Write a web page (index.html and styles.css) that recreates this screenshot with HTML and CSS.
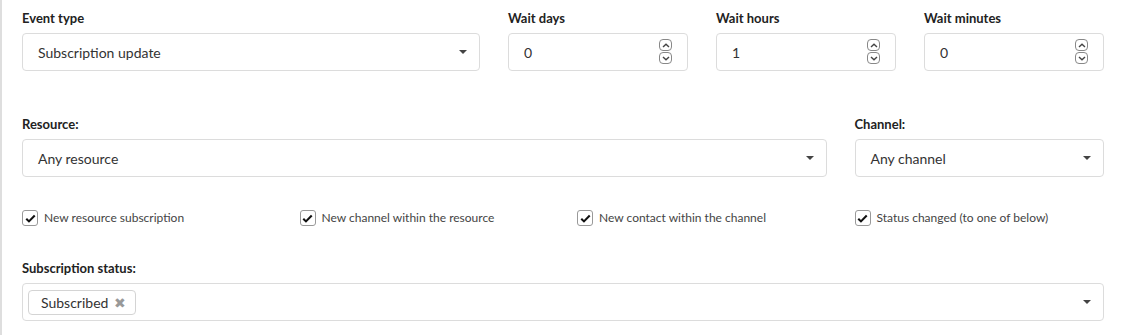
FILE: index.html
```html
<!DOCTYPE html>
<html>
<head>
<meta charset="utf-8">
<link rel="stylesheet" href="styles.css">
</head>
<body>
<div class="panel">
  <div class="row row-top">
    <div class="group">
      <div class="label">Event type</div>
      <div class="field select">
        <span class="value">Subscription update</span>
        <span class="caret"></span>
      </div>
    </div>
    <div class="group">
      <div class="label">Wait days</div>
      <div class="field number">
        <span class="value">0</span>
        <span class="spin"><span class="spin-btn"><svg viewBox="0 0 8 5" width="8" height="5"><path d="M1 4 L4 1.2 L7 4" fill="none" stroke="#444" stroke-width="1.4"/></svg></span><span class="spin-btn"><svg viewBox="0 0 8 5" width="8" height="5"><path d="M1 1 L4 3.8 L7 1" fill="none" stroke="#444" stroke-width="1.4"/></svg></span></span>
      </div>
    </div>
    <div class="group">
      <div class="label">Wait hours</div>
      <div class="field number">
        <span class="value">1</span>
        <span class="spin"><span class="spin-btn"><svg viewBox="0 0 8 5" width="8" height="5"><path d="M1 4 L4 1.2 L7 4" fill="none" stroke="#444" stroke-width="1.4"/></svg></span><span class="spin-btn"><svg viewBox="0 0 8 5" width="8" height="5"><path d="M1 1 L4 3.8 L7 1" fill="none" stroke="#444" stroke-width="1.4"/></svg></span></span>
      </div>
    </div>
    <div class="group">
      <div class="label">Wait minutes</div>
      <div class="field number">
        <span class="value">0</span>
        <span class="spin"><span class="spin-btn"><svg viewBox="0 0 8 5" width="8" height="5"><path d="M1 4 L4 1.2 L7 4" fill="none" stroke="#444" stroke-width="1.4"/></svg></span><span class="spin-btn"><svg viewBox="0 0 8 5" width="8" height="5"><path d="M1 1 L4 3.8 L7 1" fill="none" stroke="#444" stroke-width="1.4"/></svg></span></span>
      </div>
    </div>
  </div>

  <div class="row row-grid row-res">
    <div class="group span3">
      <div class="label">Resource:</div>
      <div class="field select">
        <span class="value">Any resource</span>
        <span class="caret"></span>
      </div>
    </div>
    <div class="group">
      <div class="label">Channel:</div>
      <div class="field select">
        <span class="value">Any channel</span>
        <span class="caret"></span>
      </div>
    </div>
  </div>

  <div class="row row-grid row-checks">
    <label class="check"><span class="box"><svg viewBox="0 0 12 10" width="11" height="9"><path d="M1.3 5.2 L4.3 8.2 L10.7 1.6" fill="none" stroke="#111" stroke-width="2.3"/></svg></span>New resource subscription</label>
    <label class="check"><span class="box"><svg viewBox="0 0 12 10" width="11" height="9"><path d="M1.3 5.2 L4.3 8.2 L10.7 1.6" fill="none" stroke="#111" stroke-width="2.3"/></svg></span>New channel within the resource</label>
    <label class="check"><span class="box"><svg viewBox="0 0 12 10" width="11" height="9"><path d="M1.3 5.2 L4.3 8.2 L10.7 1.6" fill="none" stroke="#111" stroke-width="2.3"/></svg></span>New contact within the channel</label>
    <label class="check"><span class="box"><svg viewBox="0 0 12 10" width="11" height="9"><path d="M1.3 5.2 L4.3 8.2 L10.7 1.6" fill="none" stroke="#111" stroke-width="2.3"/></svg></span>Status changed (to one of below)</label>
  </div>

  <div class="row row-status">
    <div class="group">
      <div class="label">Subscription status:</div>
      <div class="field select multi">
        <span class="tag">Subscribed <span class="tag-x">✖</span></span>
        <span class="caret"></span>
      </div>
    </div>
  </div>
</div>
</body>
</html>
```

FILE: styles.css
```css
html, body {
  margin: 0;
  padding: 0;
  background: #fff;
}
body {
  font-family: "Lato", "Liberation Sans", sans-serif;
  color: #333;
}
.panel {
  border-left: 2px solid #dedede;
  height: 335px;
  box-sizing: border-box;
  padding: 9px 0 0 20px;
  width: 1104px;
}
.row-top {
  display: grid;
  grid-template-columns: 458px 180px 180px 180px;
  column-gap: 28px;
}
.row-grid {
  display: grid;
  grid-template-columns: repeat(4, 1fr);
  column-gap: 28px;
}
.span3 { grid-column: span 3; }
.row-res { margin-top: 44px; }
.row-checks { margin-top: 33px; }
.row-status { margin-top: 33px; }
.label {
  font-size: 13px;
  font-weight: 700;
  line-height: 18px;
  margin-bottom: 6px;
  color: #222;
}
.field {
  height: 38px;
  box-sizing: border-box;
  border: 1px solid #dcdcdc;
  border-radius: 4px;
  display: flex;
  align-items: center;
  padding: 0 12px 0 15px;
  font-size: 14px;
  color: #333;
  background: #fff;
}
.field .value { flex: 1; }
.caret {
  width: 0;
  height: 0;
  border-left: 4px solid transparent;
  border-right: 4px solid transparent;
  border-top: 4px solid #444;
}
.number { padding-right: 15px; }
.spin {
  display: flex;
  flex-direction: column;
}
.spin-btn {
  width: 11px;
  height: 10px;
  border: 1px solid #888;
  border-radius: 4px;
  display: flex;
  align-items: center;
  justify-content: center;
  margin-bottom: 1px;
}
.check {
  display: flex;
  align-items: center;
  font-size: 12px;
  color: #444;
  line-height: 16px;
}
.box {
  width: 14px;
  height: 14px;
  border: 1px solid #999;
  border-radius: 3px;
  display: flex;
  align-items: center;
  justify-content: center;
  margin-right: 6px;
}
.multi { padding-left: 5px; }
.tag {
  flex: 0 0 auto;
  display: flex;
  align-items: center;
  height: 25px;
  box-sizing: border-box;
  border: 1px solid #d4d4d4;
  border-radius: 4px;
  padding: 0 9px 0 12px;
  font-size: 14px;
  color: #333;
}
.tag-x {
  color: #999;
  font-size: 14px;
  margin-left: 6px;
}
.multi .caret { margin-left: auto; }
```
